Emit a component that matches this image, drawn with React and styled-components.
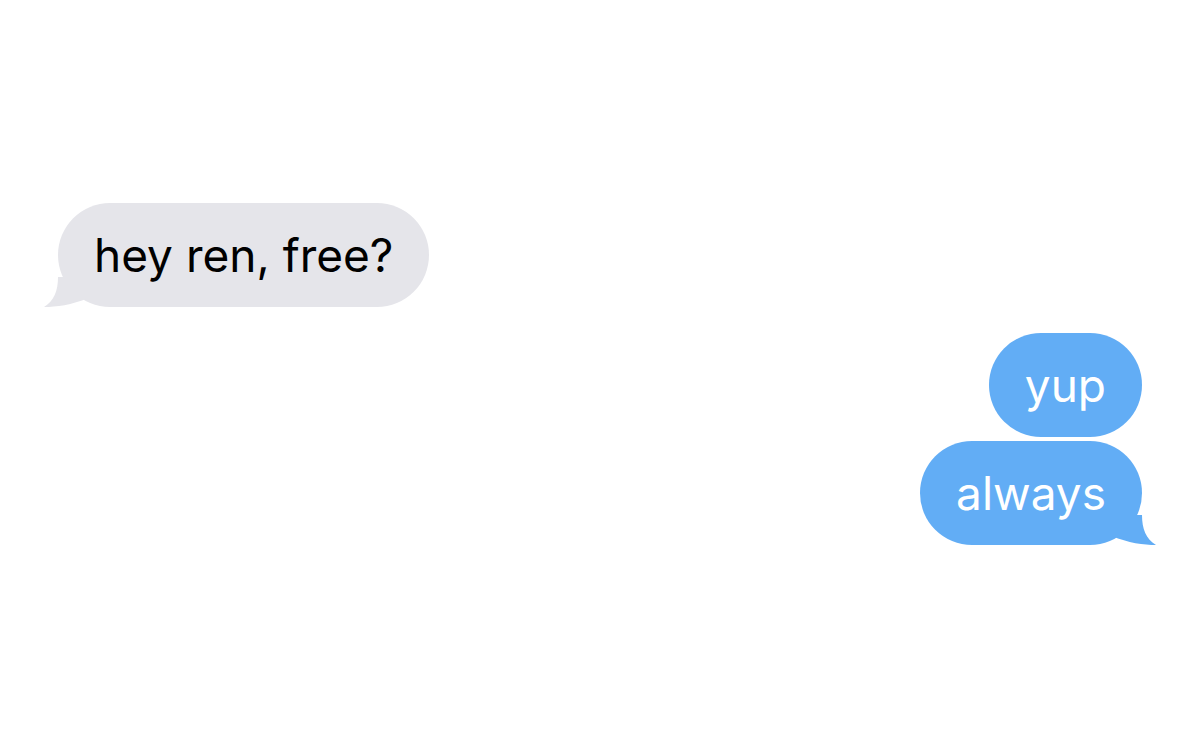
import React from "react";
import styled, { createGlobalStyle } from "styled-components";

const GlobalStyle = createGlobalStyle`
  html, body {
    margin: 0;
    padding: 0;
    background: #ffffff;
  }
  body {
    font-family: Inter, "Liberation Sans", Arial, sans-serif;
  }
`;

const messages = [
  { id: 1, text: "hey ren, free?", mine: false, tail: true },
  { id: 2, text: "yup", mine: true, tail: false },
  { id: 3, text: "always", mine: true, tail: true },
];

function Tail({ mine }) {
  return (
    <TailSvg $mine={mine} viewBox="0 0 44 30" width="44" height="30">
      <path
        d="M14 0 C14 14 10 24 0 30 C12 30 28 28 44 21 L44 0 Z"
        fill={mine ? "#62adf5" : "#e5e5ea"}
      />
    </TailSvg>
  );
}

function App() {
  return (
    <>
      <GlobalStyle />
      <Thread>
        {messages.map((m, i) => {
          const prev = messages[i - 1];
          const grouped = prev && prev.mine === m.mine;
          return (
            <Row key={m.id} $mine={m.mine} $grouped={grouped}>
              <Bubble $mine={m.mine}>
                <Text>{m.text}</Text>
                {m.tail && <Tail mine={m.mine} />}
              </Bubble>
            </Row>
          );
        })}
      </Thread>
    </>
  );
}

const Thread = styled.div`
  width: 1200px;
  height: 746px;
  box-sizing: border-box;
  padding: 203px 58px 0 58px;
  display: flex;
  flex-direction: column;
`;

const Row = styled.div`
  display: flex;
  justify-content: ${(p) => (p.$mine ? "flex-end" : "flex-start")};
  margin-top: ${(p) => (p.$grouped ? "4px" : "26px")};
  &:first-child {
    margin-top: 0;
  }
`;

const Bubble = styled.div`
  position: relative;
  box-sizing: border-box;
  height: 104px;
  padding: 0 36px;
  display: flex;
  align-items: center;
  border-radius: 52px;
  font-size: 46px;
  background: ${(p) => (p.$mine ? "#62adf5" : "#e5e5ea")};
  color: ${(p) => (p.$mine ? "#ffffff" : "#000000")};
`;

const Text = styled.span`
  position: relative;
  z-index: 1;
`;

const TailSvg = styled.svg`
  position: absolute;
  bottom: 0;
  ${(p) => (p.$mine ? "right: -14px; transform: scaleX(-1);" : "left: -14px;")}
`;

export default App;
